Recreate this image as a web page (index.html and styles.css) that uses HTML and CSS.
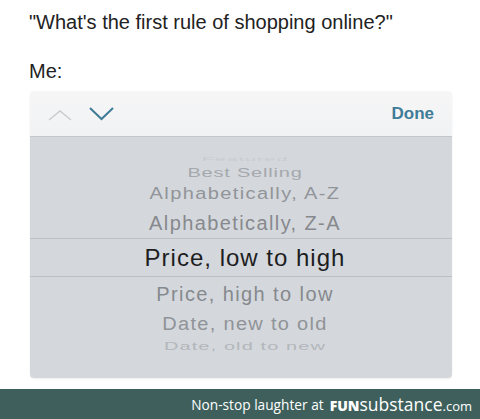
FILE: index.html
```html
<!DOCTYPE html>
<html lang="en">
<head>
    <meta charset="UTF-8">
    <meta name="viewport" content="width=device-width, initial-scale=1.0">
    <title>first rule</title>
    <link rel="stylesheet" href="styles.css">
</head>
<body>

<div class="intro">
    <p class="quote">"What's the first rule of shopping online?"</p>
    <p class="me">Me:</p>
</div>

<div class="sheet">
    <div class="toolbar">
        <svg class="chev" width="26" height="14" viewBox="0 0 26 14">
            <polyline points="1,12 12,3 23,12" fill="none" stroke="#c9cacc" stroke-width="1.4"/>
        </svg>
        <svg class="chev" width="28" height="16" viewBox="0 0 28 16">
            <polyline points="2,2 13.5,13 25,2" fill="none" stroke="#3f7c98" stroke-width="2"/>
        </svg>
        <span class="done">Done</span>
    </div>

    <div class="picker">
        <div class="row r-featured"><span>Featured</span></div>
        <div class="row r-best"><span>Best Selling</span></div>
        <div class="row r-az"><span>Alphabetically, A-Z</span></div>
        <div class="row r-za"><span>Alphabetically, Z-A</span></div>
        <div class="row r-sel"><span>Price, low to high</span></div>
        <div class="row r-hl"><span>Price, high to low</span></div>
        <div class="row r-no"><span>Date, new to old</span></div>
        <div class="row r-on"><span>Date, old to new</span></div>
    </div>
</div>

<div class="footer">
    <span class="tag">Non-stop laughter at</span>
    <span class="brand"><b>FUN</b>substance<small>.com</small></span>
</div>

</body>
</html>
```

FILE: styles.css
```css
body {
    margin: 0;
    background: #fff;
    font-family: "Liberation Sans", Arial, sans-serif;
    overflow: hidden;
}
.intro {
    padding: 10px 0 0 29px;
    color: #222;
}
.intro p {
    margin: 0;
    font-size: 20px;
    line-height: 24px;
}
.intro .me {
    margin-top: 25px;
}

.sheet {
    margin: 8px 28px 0 30px;
    border-radius: 4px;
    overflow: hidden;
    box-shadow: 0 1px 2px rgba(0, 0, 0, 0.08);
}
.toolbar {
    display: flex;
    align-items: center;
    height: 45px;
    padding: 0 18px 0 18px;
    background: linear-gradient(#f6f6f7, #f1f2f3);
    border-bottom: 1px solid #c4c8cc;
}
.chev {
    display: block;
}
.chev:first-child {
    margin-right: 14px;
    margin-top: 2px;
}
.done {
    margin-left: auto;
    font-size: 17px;
    font-weight: bold;
    color: #3f7c98;
}

/* the wheel: rows squash toward the top and bottom edges */
.picker {
    display: flex;
    flex-direction: column;
    height: 241px;
    padding-top: 18px;
    box-sizing: border-box;
    background: #d4d8dd;
}
.row {
    display: flex;
    justify-content: center;
    padding-left: 8px;
    font-size: 20px;
    letter-spacing: 1.4px;
    white-space: nowrap;
    overflow: visible;
}
.row span {
    display: block;
}
.r-featured { height: 12px; line-height: 12px; color: #c9ccd0; letter-spacing: 0.8px; overflow: hidden; }
.r-featured span { transform: scaleY(0.25) translateY(-6px); }
.r-best { height: 10px; line-height: 10px; color: #a5a8ac; letter-spacing: 0.8px; }
.r-best span { transform: scaleY(0.65); }
.r-az { height: 32px; line-height: 32px; color: #919498; }
.r-az span { transform: scaleY(0.87); }
.r-za { height: 29px; line-height: 29px; color: #87898d; }
.r-sel {
    height: 37px;
    line-height: 37px;
    font-size: 24px;
    letter-spacing: 1px;
    color: #1e1e1f;
    border-top: 1px solid #bcc0c5;
    border-bottom: 1px solid #bcc0c5;
}
.r-hl { height: 35px; line-height: 35px; color: #86898d; }
.r-no { height: 25px; line-height: 25px; color: #909397; letter-spacing: 1.3px; }
.r-no span { transform: scaleY(0.9); }
.r-on { height: 18px; line-height: 18px; color: #b3b6ba; letter-spacing: 1.1px; }
.r-on span { transform: scaleY(0.58); }

.footer {
    display: flex;
    justify-content: flex-end;
    align-items: center;
    height: 30px;
    margin-top: 11px;
    padding-right: 8px;
    background: #3e5f5c;
    color: #fff;
    font-family: "Open Sans", sans-serif;
}
.tag {
    font-size: 13.7px;
    margin-right: 6px;
}
.brand {
    font-size: 17.5px;
}
.brand b {
    font-size: 14px;
    font-weight: 800;
}
.brand small {
    font-size: 13px;
}
```
